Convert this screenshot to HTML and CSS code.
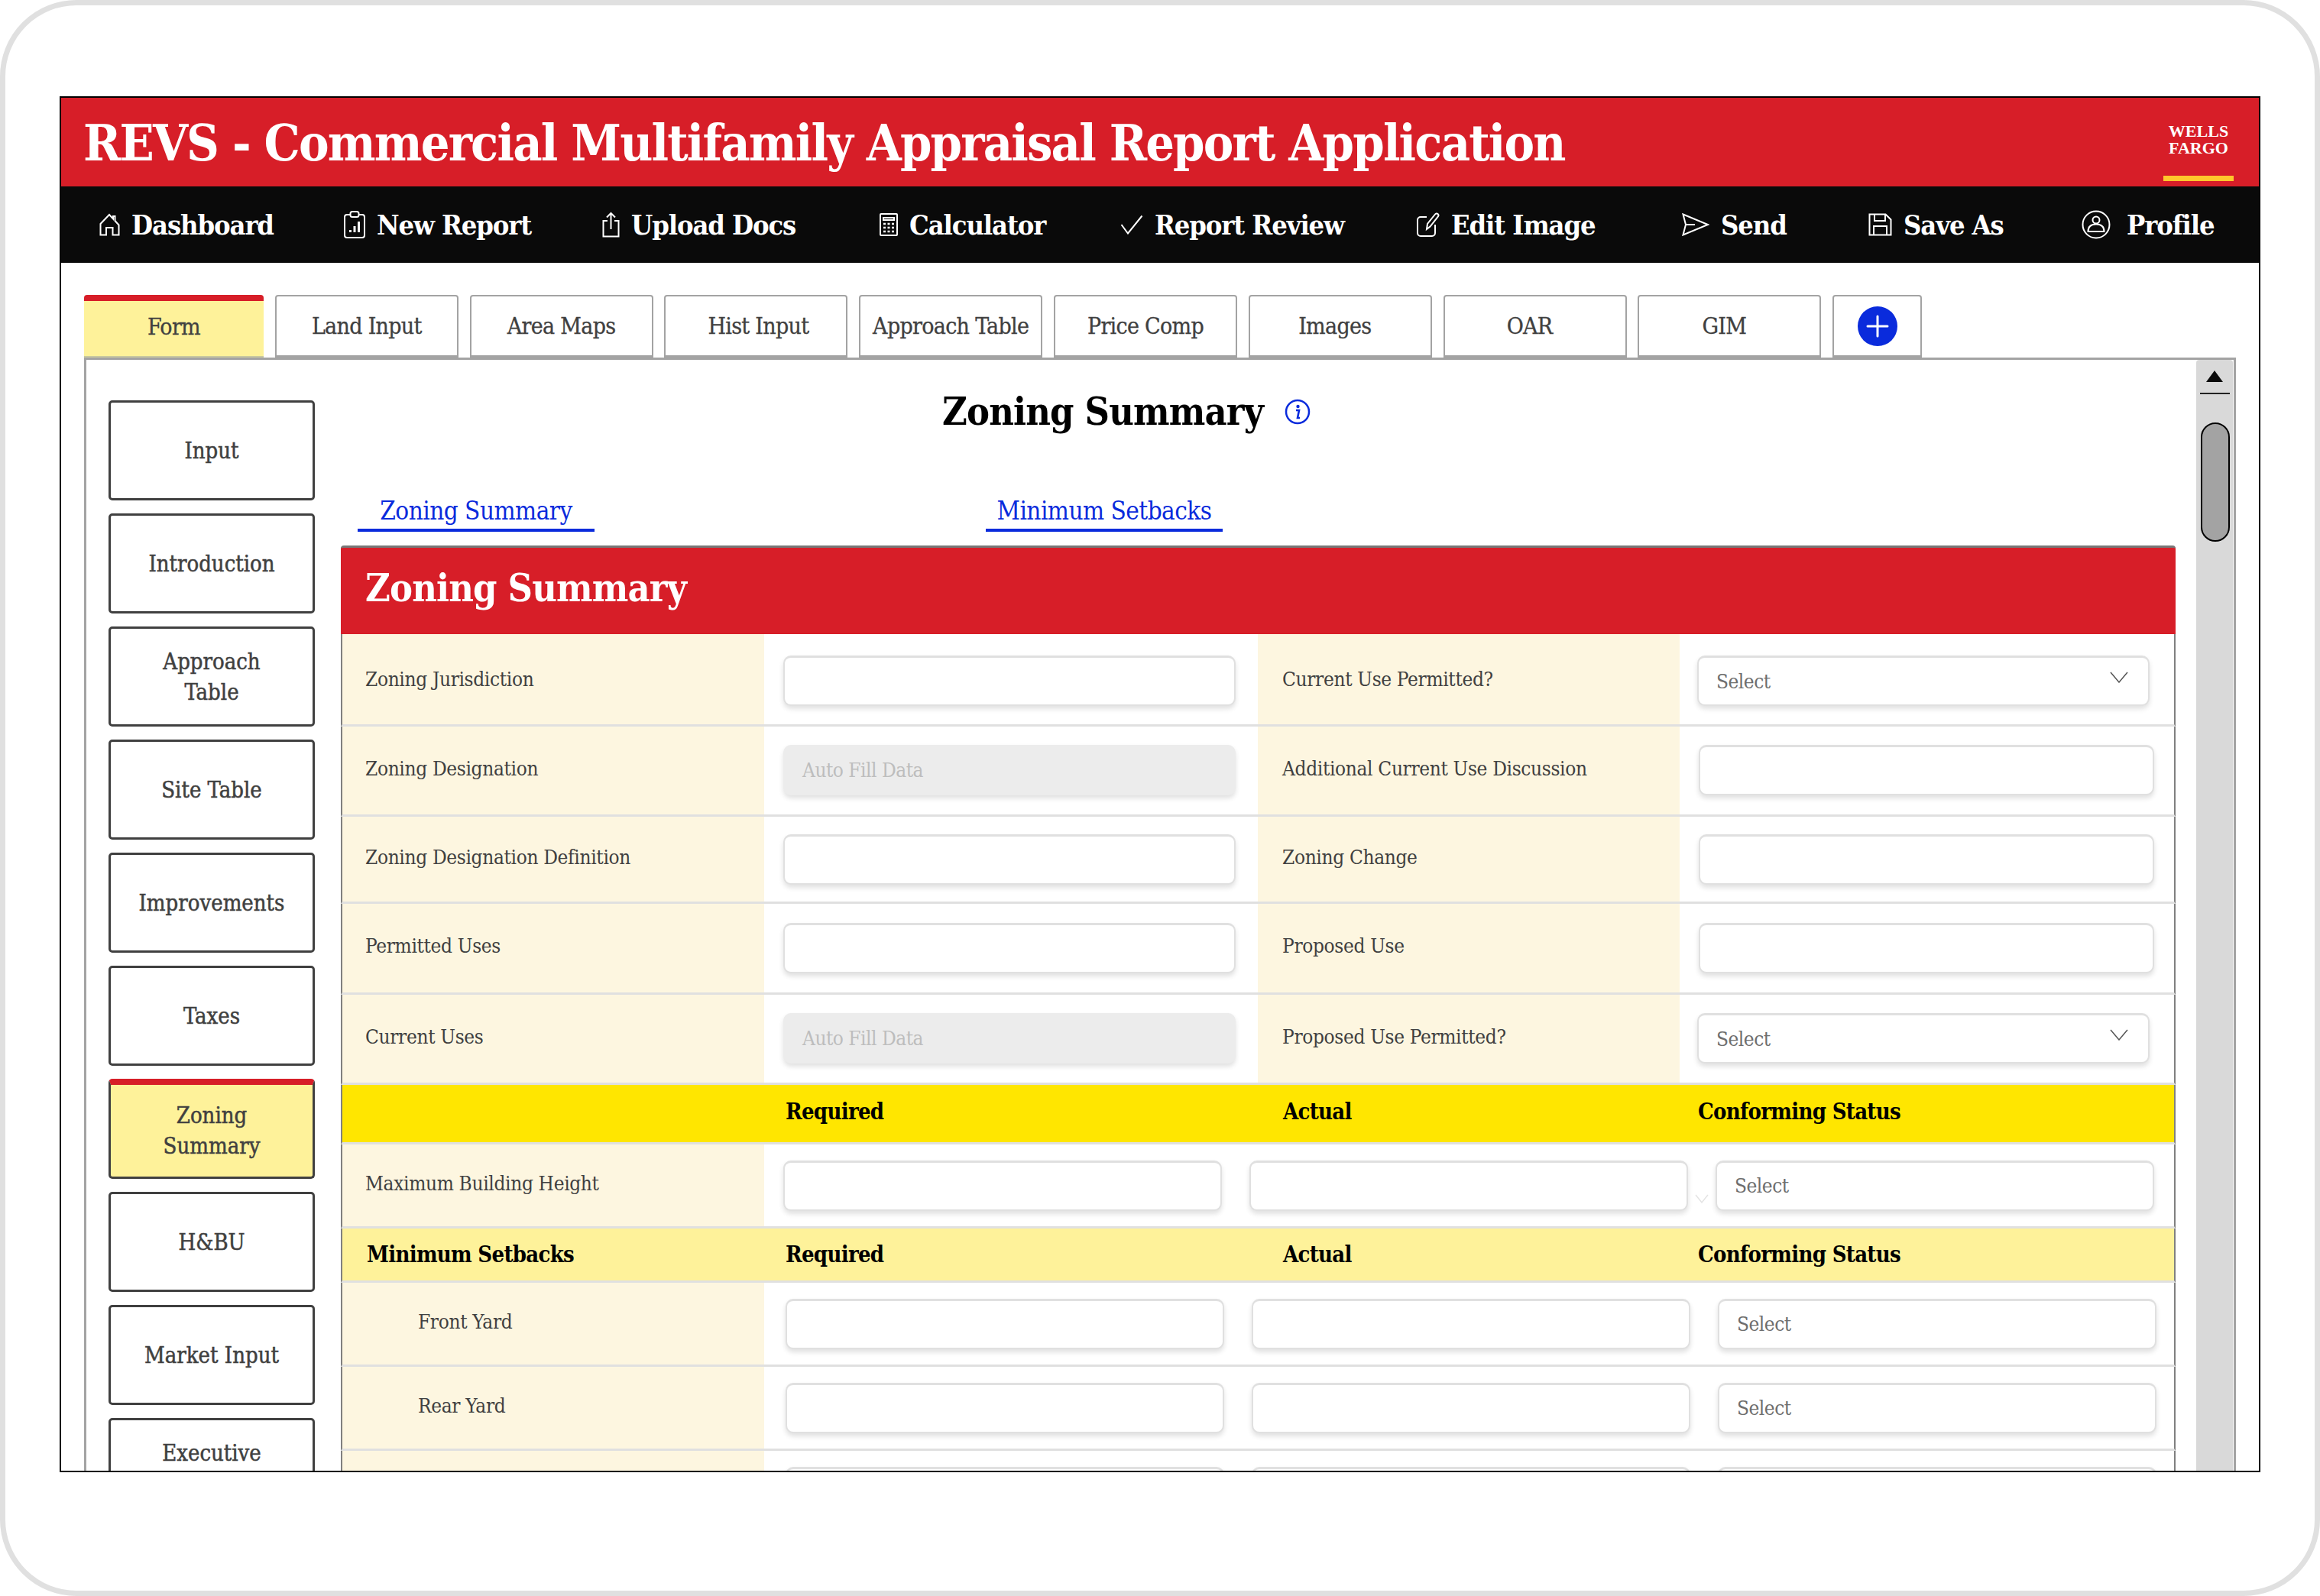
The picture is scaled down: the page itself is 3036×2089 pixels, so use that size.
FILE: index.html
```html
<!DOCTYPE html>
<html lang="en">
<head>
  <meta charset="UTF-8">
  <title>REVS - Zoning Summary</title>
  <link rel="stylesheet" href="styles.css">
</head>
<body>
  <div class="device">
    <div class="app">
      <header class="topbar">
        <h1>REVS - Commercial Multifamily Appraisal Report Application</h1>
        <div class="logo">
          <div class="logo-text">WELLS<br>FARGO</div>
          <div class="logo-bar"></div>
        </div>
      </header>

      <nav class="mainnav">
        <a class="nav-item">
          <svg width="27" height="30" viewBox="0 0 27 30"><path d="M1.500 28.500V14L13 2l5 5.500V4h2.500v6l5 5.500v13H17.500V19h-8.500v9.500z"/></svg>
          Dashboard
        </a>
        <a class="nav-item">
          <svg width="28" height="36" viewBox="0 0 28 36"><path d="M8 5H4a3 3 0 0 0-3 3v24a3 3 0 0 0 3 3h20a3 3 0 0 0 3-3V8a3 3 0 0 0-3-3h-4"/><rect x="8.500" y="1" width="11" height="7" rx="2.500"/><path class="bars" d="M8.500 28v-3M14 28v-8M19.500 28V14"/></svg>
          New Report
        </a>
        <a class="nav-item">
          <svg width="23" height="34" viewBox="0 0 23 34"><path d="M7 12H1.500v20.500h20V12H16M11.500 23V2M6 7.500 11.500 2 17 7.500"/></svg>
          Upload Docs
        </a>
        <a class="nav-item">
          <svg width="24" height="30" viewBox="0 0 24 30"><rect x="1" y="1" width="22" height="28" rx="1"/><path d="M5 6h14v3H5z"/><path class="dots" d="M5 14h3M10.500 14h3M16 14h3M5 19h3M10.500 19h3M16 19h3M5 24h3M10.500 24h3M16 24h3"/></svg>
          Calculator
        </a>
        <a class="nav-item">
          <svg width="30" height="26" viewBox="0 0 30 26"><path d="M1.500 13 10 24.500 28.500 1.500"/></svg>
          Report Review
        </a>
        <a class="nav-item">
          <svg width="30" height="32" viewBox="0 0 30 32"><path d="M13 6H5a4 4 0 0 0-4 4v17a4 4 0 0 0 4 4h15a4 4 0 0 0 4-4V16"/><path d="M13 22l1-7L24 2.500c1-1.200 2.500-1.400 3.500-.5s1.200 2.500.2 3.700L17.500 18.500z"/></svg>
          Edit Image
        </a>
        <a class="nav-item">
          <svg width="36" height="30" viewBox="0 0 36 30"><path d="M1.500 1.500 34 15 1.500 28.500 5 15zM5 15h12"/></svg>
          Send
        </a>
        <a class="nav-item">
          <svg width="31" height="30" viewBox="0 0 31 30"><path d="M1.500 1.500h21l7 7v20h-28zM8 1.500v8.500h14V1.500M7 28.500V17h17v11.500"/></svg>
          Save As
        </a>
        <a class="nav-item">
          <svg width="44" height="38" viewBox="0 0 44 38"><circle cx="19" cy="19" r="17.500"/><circle cx="19" cy="13" r="4.500"/><path d="M8.500 28c0-7 4-9.500 10.500-9.500s10.500 2.500 10.500 9.500z"/></svg>
          Profile
        </a>
      </nav>

      <div class="tabs">
        <div class="tab tab-active">Form</div>
        <div class="tab">Land Input</div>
        <div class="tab">Area Maps</div>
        <div class="tab tab-right">Hist Input</div>
        <div class="tab">Approach Table</div>
        <div class="tab">Price Comp</div>
        <div class="tab tab-left">Images</div>
        <div class="tab tab-left">OAR</div>
        <div class="tab tab-left">GIM</div>
        <div class="tab tab-add">
          <svg width="52" height="52" viewBox="0 0 52 52"><circle cx="26" cy="26" r="26" fill="#0a2bdc"/><path d="M26 13v26M13 26h26" stroke="#fff" stroke-width="3" stroke-linecap="round"/></svg>
        </div>
      </div>

      <div class="panel">
        <aside class="sidebar">
          <div class="side-btn">Input</div>
          <div class="side-btn">Introduction</div>
          <div class="side-btn">Approach<br>Table</div>
          <div class="side-btn">Site Table</div>
          <div class="side-btn">Improvements</div>
          <div class="side-btn">Taxes</div>
          <div class="side-btn side-active">Zoning<br>Summary</div>
          <div class="side-btn">H&amp;BU</div>
          <div class="side-btn">Market Input</div>
          <div class="side-btn">Executive<br>Summary</div>
        </aside>

        <main class="content">
          <div class="page-title">
            <h2>Zoning Summary</h2>
            <svg width="34" height="34" viewBox="0 0 34 34"><circle cx="17" cy="17" r="15" fill="none" stroke="#0a2bdc" stroke-width="2.500"/><circle cx="17.500" cy="10" r="2.200" fill="#0a2bdc"/><path d="M15 15h4l-2 10h3" fill="none" stroke="#0a2bdc" stroke-width="2.600"/></svg>
          </div>

          <div class="subtabs">
            <a class="subtab">Zoning Summary</a>
            <a class="subtab">Minimum Setbacks</a>
          </div>

          <section class="sheet">
            <div class="sheet-head">Zoning Summary</div>

            <div class="row row-first">
              <div class="label">Zoning Jurisdiction</div>
              <div class="cell"><div class="field"></div></div>
              <div class="label label-r">Current Use Permitted?</div>
              <div class="cell cell-r">
                <div class="field field-select">Select
                  <svg class="chevron" width="24" height="15" viewBox="0 0 24 15"><path d="M1 1l11 13L23 1"/></svg>
                </div>
              </div>
            </div>
            <div class="row row-1">
              <div class="label">Zoning Designation</div>
              <div class="cell"><div class="field field-auto">Auto Fill Data</div></div>
              <div class="label label-r">Additional Current Use Discussion</div>
              <div class="cell cell-r"><div class="field field-wide"></div></div>
            </div>
            <div class="row row-2">
              <div class="label">Zoning Designation Definition</div>
              <div class="cell"><div class="field"></div></div>
              <div class="label label-r">Zoning Change</div>
              <div class="cell cell-r"><div class="field field-wide"></div></div>
            </div>
            <div class="row row-1">
              <div class="label">Permitted Uses</div>
              <div class="cell"><div class="field"></div></div>
              <div class="label label-r">Proposed Use</div>
              <div class="cell cell-r"><div class="field field-wide"></div></div>
            </div>
            <div class="row row-1">
              <div class="label">Current Uses</div>
              <div class="cell"><div class="field field-auto">Auto Fill Data</div></div>
              <div class="label label-r">Proposed Use Permitted?</div>
              <div class="cell cell-r">
                <div class="field field-select">Select
                  <svg class="chevron" width="24" height="15" viewBox="0 0 24 15"><path d="M1 1l11 13L23 1"/></svg>
                </div>
              </div>
            </div>

            <div class="row-head head-strong">
              <div></div>
              <div class="th">Required</div>
              <div class="th th-actual">Actual</div>
              <div class="th th-status">Conforming Status</div>
            </div>

            <div class="row3 row3-tall">
              <div class="label">Maximum Building Height</div>
              <div class="cell3">
                <div class="field3"></div>
                <div class="field3"></div>
                <div class="field3 field-select">Select</div>
              </div>
              <svg class="stray-chevron" width="18" height="12" viewBox="0 0 18 12"><path d="M1 1l8 10 8-10"/></svg>
            </div>

            <div class="row-head head-light">
              <div class="th th-group">Minimum Setbacks</div>
              <div class="th">Required</div>
              <div class="th th-actual">Actual</div>
              <div class="th th-status">Conforming Status</div>
            </div>

            <div class="row3 row3-tall">
              <div class="label label-in">Front Yard</div>
              <div class="cell3 cell3-in">
                <div class="field3"></div>
                <div class="field3"></div>
                <div class="field3 field-select">Select</div>
              </div>
            </div>
            <div class="row3 row3-tall">
              <div class="label label-in">Rear Yard</div>
              <div class="cell3 cell3-in">
                <div class="field3"></div>
                <div class="field3"></div>
                <div class="field3 field-select">Select</div>
              </div>
            </div>
            <div class="row3 row3-tall">
              <div class="label label-in"></div>
              <div class="cell3 cell3-in">
                <div class="field3"></div>
                <div class="field3"></div>
                <div class="field3"></div>
              </div>
            </div>
          </section>
        </main>

        <div class="scrollbar">
          <div class="scroll-arrow"></div>
          <div class="scroll-line"></div>
          <div class="scroll-thumb"></div>
        </div>
      </div>
    </div>
  </div>
</body>
</html>
```

FILE: styles.css
```css
html, body {
  margin: 0;
  height: 100%;
  overflow: hidden;
  background-color: white;
}
body {
  font-family: "DejaVu Serif", serif;
  font-stretch: condensed;
  color: #404040;
}
h1, h2 {
  margin: 0;
}
.device {
  box-sizing: border-box;
  width: 3036px;
  height: 2089px;
  padding: 119px 71px 0;
  border: 7px solid #e0e0e0;
  border-radius: 100px;
}
.app {
  display: flex;
  flex-direction: column;
  box-sizing: border-box;
  width: 2880px;
  height: 1801px;
  border: 2px solid black;
  overflow: hidden;
}

/* header */
.topbar {
  display: flex;
  justify-content: space-between;
  flex: none;
  height: 116px;
  padding: 0 33px 0 29px;
  background-color: #d71e28;
  color: white;
}
.topbar h1 {
  font-size: 66px;
  line-height: 118px;
  font-weight: bold;
  letter-spacing: -1.850px;
}
.logo {
  display: flex;
  flex-direction: column;
  justify-content: space-between;
  width: 92px;
  margin-top: 33px;
  height: 76px;
}
.logo-text {
  font-family: "Liberation Serif", serif;
  font-stretch: normal;
  font-weight: bold;
  font-size: 22px;
  line-height: 22px;
  text-align: center;
}
.logo-bar {
  height: 7px;
  background-color: #ffc72c;
}

/* black nav */
.mainnav {
  display: grid;
  grid-template-columns: 320px 338px 363px 315px 388px 347px 244px 279px 1fr;
  align-items: center;
  flex: none;
  height: 100px;
  padding-left: 50px;
  background-color: #0a0a0a;
  color: white;
  font-size: 36px;
  font-weight: bold;
  letter-spacing: -1.100px;
}
.nav-item {
  display: flex;
  align-items: center;
  gap: 15px;
}
.nav-item svg {
  fill: none;
  stroke: white;
  stroke-width: 2;
  flex: none;
}
.nav-item svg .bars {
  stroke-width: 3;
}
.nav-item svg .dots {
  stroke-width: 2.500;
}

/* tabs */
.tabs {
  display: flex;
  gap: 14.800px;
  flex: none;
  margin-top: 42px;
  padding-left: 30px;
}
.tab {
  display: flex;
  align-items: center;
  justify-content: center;
  box-sizing: border-box;
  width: 240px;
  height: 82px;
  background-color: white;
  border: 2px solid #a3a3a3;
  border-bottom-width: 3px;
  border-radius: 4px 4px 0 0;
  font-size: 30px;
  letter-spacing: -0.700px;
  -webkit-text-stroke: 0.3px #404040;
}
.tab-active {
  width: 235px;
  padding-bottom: 6px;
  background-color: #fef29a;
  border: none;
  border-top: 8px solid #d71e28;
  border-bottom: 2px solid #c8c8a0;
}
.tab-left {
  padding-right: 14px;
}
.tab-right {
  padding-left: 6px;
}
.tab-add {
  width: 117px;
}

/* panel */
.panel {
  display: flex;
  flex: 1;
  min-height: 0;
  margin-left: 30px;
  width: 2816px;
  box-sizing: border-box;
  border: 2px solid #a3a3a3;
  border-width: 3px 3px 0 3px;
}
.sidebar {
  display: flex;
  flex-direction: column;
  gap: 17px;
  flex: none;
  width: 270px;
  padding: 53px 0 0 29px;
}
.side-btn {
  display: flex;
  align-items: center;
  justify-content: center;
  flex: none;
  box-sizing: border-box;
  height: 131px;
  background-color: white;
  border: 3px solid #404040;
  border-radius: 5px;
  font-size: 29px;
  line-height: 40px;
  text-align: center;
  -webkit-text-stroke: 0.5px #404040;
}
.side-active {
  background-color: #fef29a;
  border-top: 8px solid #d71e28;
}

/* main column */
.content {
  flex: 1;
  padding-left: 34px;
  padding-right: 27px;
  min-width: 0;
}
.page-title {
  display: flex;
  align-items: center;
  gap: 28px;
  height: 78px;
  padding: 29px 0 0 787px;
  color: black;
}
.page-title h2 {
  font-size: 50px;
  font-weight: bold;
  line-height: 78px;
  letter-spacing: -0.850px;
}
.subtabs {
  display: flex;
  gap: 512px;
  margin: 61px 0 18px 22px;
}
.subtab {
  box-sizing: border-box;
  width: 310px;
  height: 57px;
  border-bottom: 4px solid #0a2bdc;
  color: #0a2bdc;
  font-size: 33px;
  letter-spacing: -0.550px;
  line-height: 60px;
  text-align: center;
}

/* zoning sheet */
.sheet-head {
  height: 113px;
  background-color: #d71e28;
  border-top: 3px solid #777;
  border-radius: 4px 4px 0 0;
  color: white;
  font-size: 50px;
  font-weight: bold;
  letter-spacing: -0.850px;
  line-height: 106px;
  padding-left: 32px;
}
.row, .row-head, .row3 {
  display: grid;
  box-sizing: border-box;
  border-bottom: 3px solid #e0e0e0;
  border-left: 2px solid #808080;
  border-right: 2px solid #808080;
}
.row, .row-head {
  grid-template-columns: 552px 646px 552px 1fr;
}
.row-first {
  height: 120.500px;
}
.row-first .label {
  padding-bottom: 0;
}
.row-first .cell {
  padding-top: 5px;
}
.row-1 {
  height: 118.500px;
}
.row-2 {
  height: 114px;
}
.row3 {
  position: relative;
  grid-template-columns: 552px 1fr;
}
.row3-tall {
  height: 110px;
}
.label {
  display: flex;
  align-items: center;
  padding: 0 0 5px 30px;
  background-color: #fdf6e0;
  font-size: 26px;
  letter-spacing: -0.350px;
}
.label-r {
  padding-left: 32px;
}
.label-in {
  padding-left: 99px;
}
.cell {
  display: flex;
  align-items: center;
  padding: 0 0 0 25px;
}
.cell-r {
  padding-left: 23px;
}
.field, .field3 {
  display: flex;
  align-items: center;
  justify-content: space-between;
  box-sizing: border-box;
  height: 66px;
  background-color: white;
  border: 2px solid #e0e0e0;
  border-top-width: 3px;
  border-radius: 10px;
  box-shadow: 0 4px 6px rgba(0,0,0,0.12);
  font-size: 26px;
  letter-spacing: -0.500px;
}
.field {
  width: 592px;
}
.field-wide {
  width: 596px;
  margin-left: 2px;
}
.field-auto {
  padding-left: 25px;
  background-color: #ececec;
  border: none;
  color: #bdbdbd;
}
.field-select {
  padding: 0 26px 0 23px;
  color: #6e6e6e;
}
.chevron {
  fill: none;
  stroke: #555;
  stroke-width: 1.500;
  margin-bottom: 10px;
}
.cell3 {
  display: grid;
  grid-template-columns: 574px 574px 574px;
  gap: 36px;
  align-items: center;
  padding-left: 25px;
}
.cell3-in {
  padding-left: 28px;
}
.stray-chevron {
  position: absolute;
  left: 1770px;
  top: 65px;
  fill: none;
  stroke: #e4e4e4;
  stroke-width: 1.500;
}

/* yellow header rows */
.row-head {
  align-items: center;
  color: black;
  font-size: 29px;
  font-weight: bold;
  letter-spacing: -0.700px;
}
.head-strong {
  height: 78px;
  padding-bottom: 6px;
  background-color: #ffe600;
}
.head-light {
  height: 71px;
  background-color: #fef29a;
}
.th {
  padding-left: 28px;
}
.th-actual {
  padding-left: 33px;
}
.th-status {
  padding-left: 24px;
}
.th-group {
  padding-left: 32px;
}

/* fake scrollbar */
.scrollbar {
  flex: none;
  position: relative;
  width: 48px;
  margin-right: 1px;
  background-color: #d9d9d9;
  border-radius: 4px 4px 0 0;
}
.scroll-arrow {
  width: 0;
  height: 0;
  margin: 14px auto 0;
  border-left: 11px solid transparent;
  border-right: 11px solid transparent;
  border-bottom: 15px solid #0a0a0a;
}
.scroll-line {
  height: 2px;
  margin: 14px 4px 0 5px;
  background-color: #222;
}
.scroll-thumb {
  box-sizing: border-box;
  width: 38px;
  height: 156px;
  margin: 37px 0 0 6px;
  background-color: #a3a3a3;
  border: 2px solid black;
  border-radius: 19px;
}
```
